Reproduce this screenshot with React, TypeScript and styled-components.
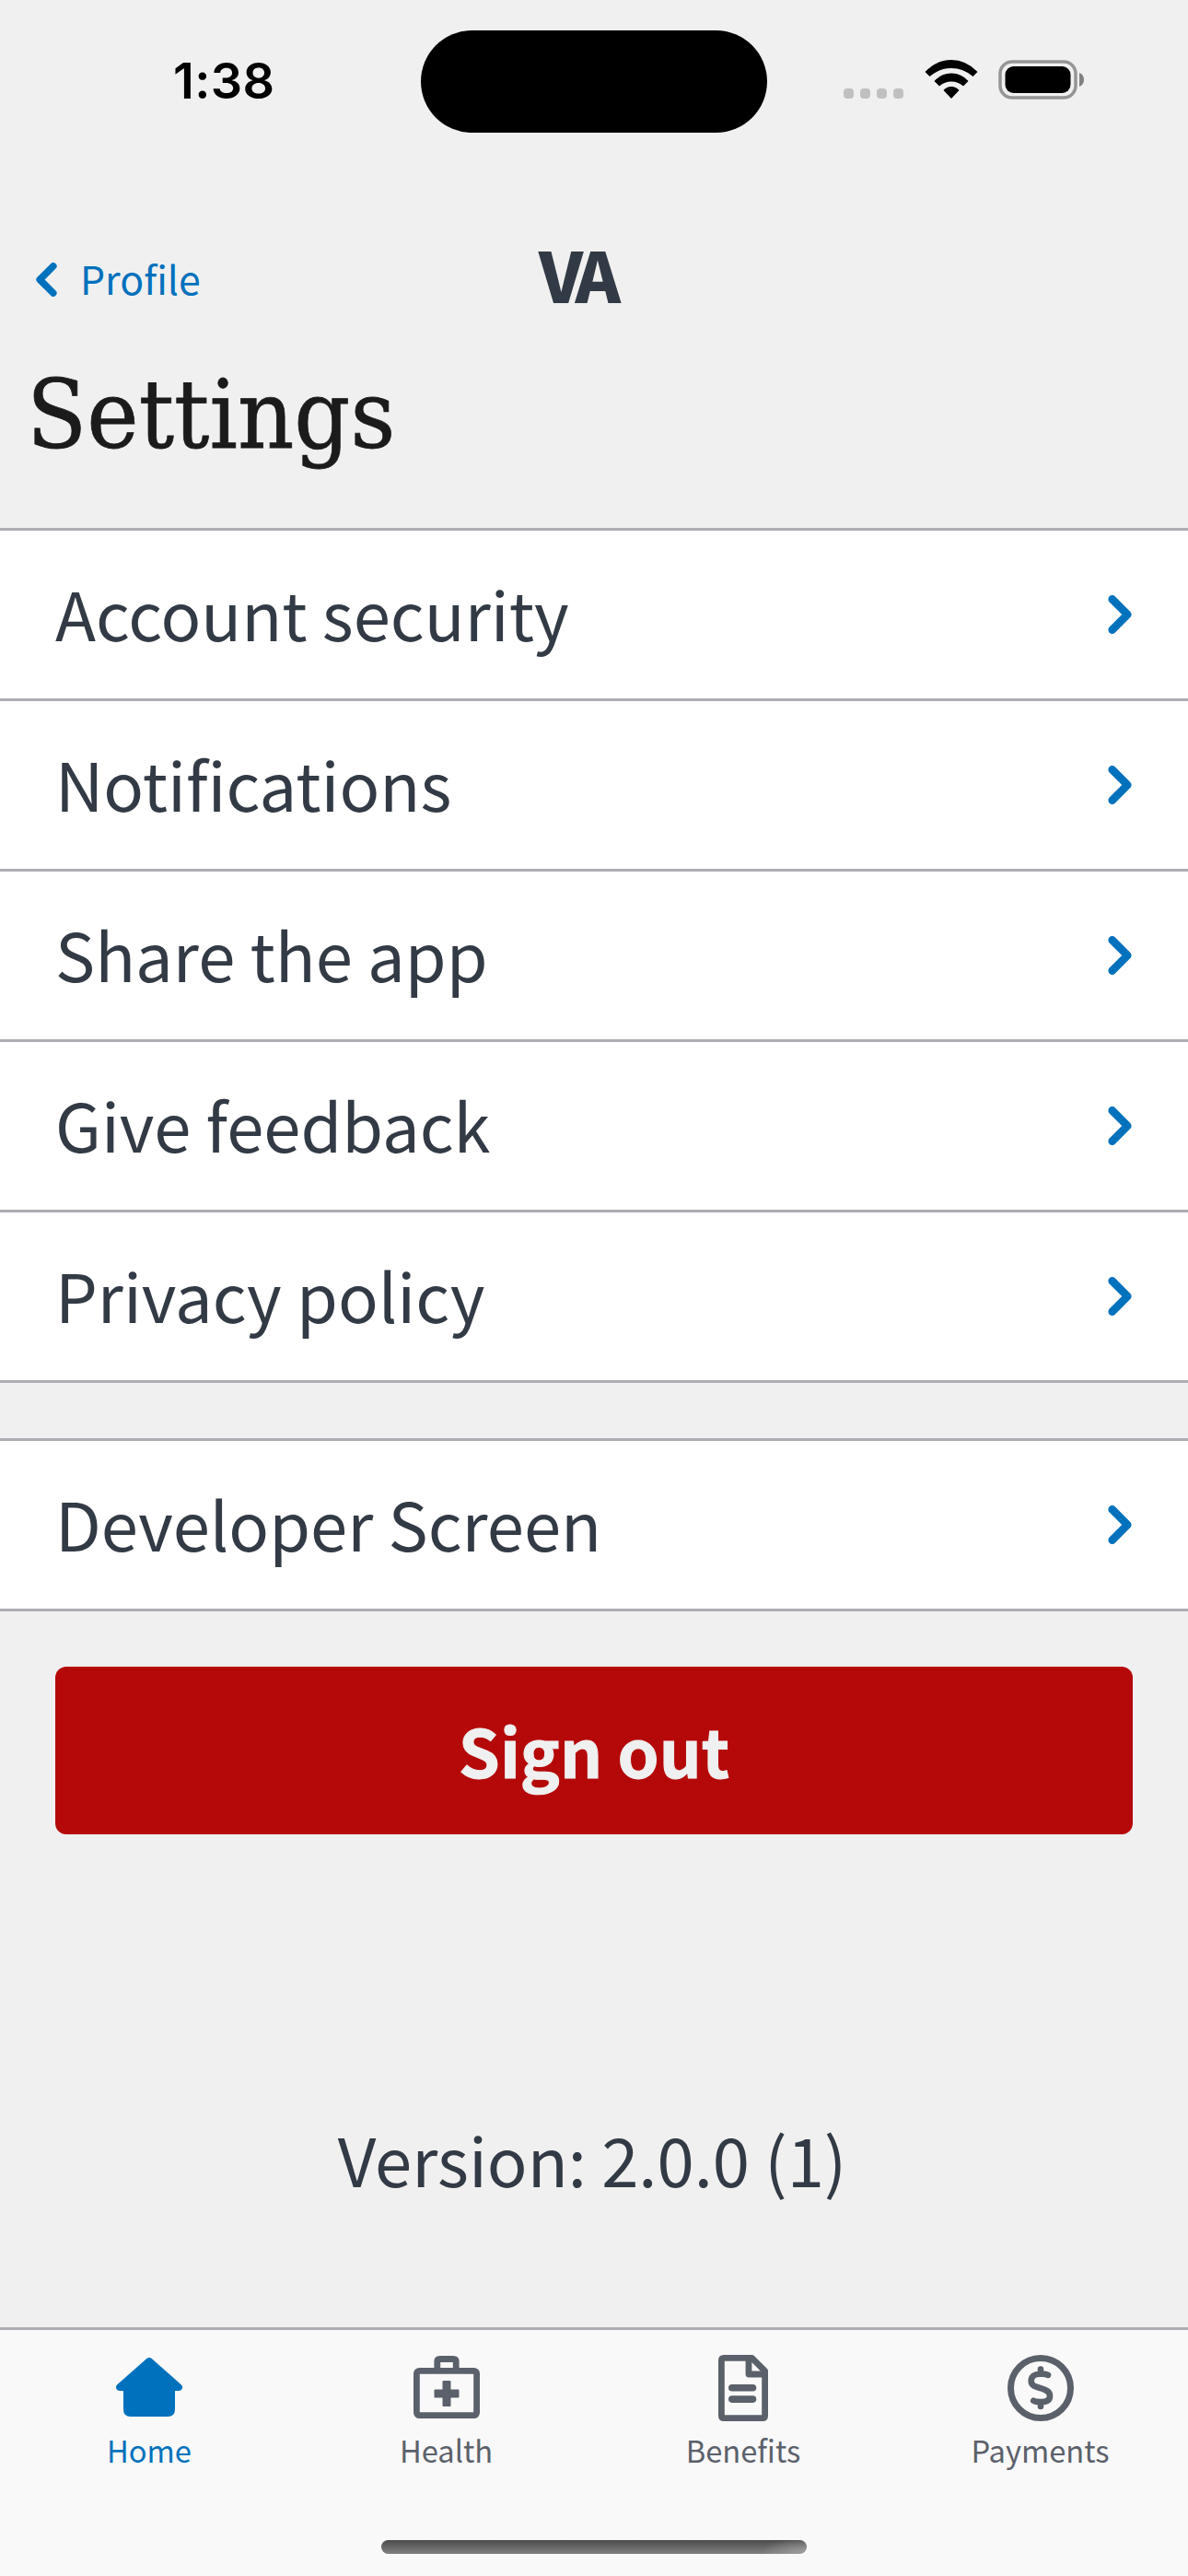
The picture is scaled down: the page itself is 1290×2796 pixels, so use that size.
import React from 'react';
import styled, { createGlobalStyle } from 'styled-components';

const sans = "'Noto Sans CJK JP', 'Noto Sans', sans-serif";
const blue = '#0071bc';
const ink = '#323a45';
const line = '#adadb4';
const gray = '#5b616b';

const Global = createGlobalStyle`
  * { box-sizing: border-box; }
  body { margin: 0; background: #f0f0f0; }
  button { font: inherit; border: 0; margin: 0; padding: 0; background: none; }
`;

const Screen = styled.div`
  width: 1290px;
  height: 2796px;
  display: flex;
  flex-direction: column;
  background: #f0f0f0;
  color: ${ink};
  font-family: ${sans};
  overflow: hidden;
`;

const StatusBar = styled.header`
  height: 177px;
  flex: none;
  display: grid;
  grid-template-columns: 457px 376px 1fr;
  align-items: start;
  padding-top: 33px;
`;

const Clock = styled.time`
  padding-left: 188px;
  margin-top: 23px;
  font: 600 54px/64px Inter, sans-serif;
  letter-spacing: 0.4px;
  color: #000;
`;

const Island = styled.div`
  height: 111px;
  border-radius: 56px;
  background: #000;
`;

const StatusIcons = styled.div`
  display: flex;
  align-items: flex-end;
  padding: 32px 0 0 83px;
`;

const Signal = styled.div`
  display: flex;
  gap: 7px;
  margin: 0 23px 1px 0;
`;

const Dot = styled.i`
  width: 11px;
  height: 11px;
  border-radius: 4px;
  background: #c0c0c0;
`;

const Wifi = styled.svg`
  width: 58px;
  height: 42px;
  margin: 0 22px 1px 0;
`;

const Battery = styled.svg`
  width: 94px;
  height: 43px;
`;

const NavBar = styled.nav`
  height: 200px;
  flex: none;
  display: grid;
  grid-template-columns: 585px auto 1fr;
  align-items: start;
`;

const BackLink = styled.button`
  display: flex;
  align-items: center;
  gap: 25px;
  margin: 93px 0 0 39px;
  color: ${blue};
  font-size: 42.8px;
  line-height: 62px;
  justify-self: start;
`;

const BackIcon = styled.svg`
  width: 23px;
  height: 37px;
  margin-top: 4px;
`;

const Logo = styled.div`
  margin-top: 70px;
  font-weight: 900;
  font-size: 75px;
  line-height: 100px;
  letter-spacing: -7px;
`;

const Title = styled.h1`
  margin: 0 0 0 29px;
  height: 196px;
  flex: none;
  font: 400 102px/147px 'DejaVu Serif', serif;
  color: #1b1b1b;
  -webkit-text-stroke: 0.8px #1b1b1b;
  transform: scaleX(0.935);
  transform-origin: left;
`;

const List = styled.ul`
  list-style: none;
  margin: 0 0 60px;
  padding: 0;
  border-top: 3px solid ${line};
  background: #fff;
`;

const Row = styled.li`
  height: 185px;
  display: flex;
  align-items: center;
  justify-content: space-between;
  padding: 0 61px 0 60px;
  border-bottom: 3px solid ${line};
`;

const RowLabel = styled.span`
  font-size: 72.4px;
  line-height: 100px;
  padding-bottom: 4px;
`;

const RowIcon = styled.svg`
  width: 26px;
  height: 42px;
`;

const SignOut = styled.button`
  height: 182px;
  flex: none;
  margin: 0 60px;
  padding-bottom: 4px;
  border-radius: 12px;
  background: #b50909;
  color: #f0f0f0;
  font-family: ${sans};
  font-weight: 700;
  font-size: 72.2px;
  -webkit-text-stroke: 1px #f0f0f0;
`;

const Version = styled.p`
  margin: 302px 0 0;
  padding-right: 4px;
  font-size: 72.4px;
  line-height: 100px;
  text-align: center;
`;

const TabBar = styled.footer`
  height: 270px;
  flex: none;
  margin-top: auto;
  display: flex;
  flex-direction: column;
  align-items: center;
  border-top: 3px solid ${line};
  background: #f9f9f9;
`;

const Tabs = styled.div`
  width: 100%;
  height: 228px;
  display: grid;
  grid-template-columns: repeat(4, 1fr);
`;

const Tab = styled.button<{ $active?: boolean }>`
  display: flex;
  flex-direction: column;
  align-items: center;
  justify-content: flex-start;
  padding: 27px 0 0 1.5px;
  color: ${(p) => (p.$active ? blue : gray)};
  font-size: 32.7px;
  line-height: 48px;
`;

const TabIcon = styled.svg`
  width: 72px;
  height: 72px;
  margin-bottom: 7px;
`;

const HomeIndicator = styled.div`
  width: 462px;
  height: 15px;
  border-radius: 8px;
  background:
    radial-gradient(50px 18px at 100% 100%, rgba(165, 165, 165, 0.9), rgba(165, 165, 165, 0)),
    linear-gradient(#4c4c4c, #808080);
`;

const Chevron = ({ back }: { back?: boolean }) => {
  const Icon = back ? BackIcon : RowIcon;
  return (
    <Icon viewBox="0 0 26 42">
      <path
        transform={back ? 'translate(26 0) scale(-1 1)' : undefined}
        d="M4.700 4.400 21.300 21 4.700 37.600"
        fill="none"
        stroke={blue}
        strokeWidth="8.6"
        strokeLinecap="round"
        strokeLinejoin="round"
      />
    </Icon>
  );
};

const settings = ['Account security', 'Notifications', 'Share the app', 'Give feedback', 'Privacy policy'];

const SettingsList = ({ items }: { items: string[] }) => (
  <List>
    {items.map((item) => (
      <Row key={item}>
        <RowLabel>{item}</RowLabel>
        <Chevron />
      </Row>
    ))}
  </List>
);

const tabs = [
  {
    label: 'Home',
    icon: (
      <path
        fill="currentColor"
        d="M33 4.300q3-2.800 6 0L70.700 32.300q2 2 1 4.500-1.200 2.200-3.700 2.200H64v20q0 8-8 8H16q-8 0-8-8V39H4q-2.500 0-3.700-2.200-1-2.500 1-4.500z"
      />
    ),
  },
  {
    label: 'Health',
    icon: (
      <g>
        <g fill="none" stroke="currentColor" strokeWidth="6.800">
          <rect x="3.400" y="17.400" width="65.200" height="48.200" rx="3" />
          <path d="M25.800 17V7.500q0-3 3-3h14.400q3 0 3 3V17" />
        </g>
        <path fill="currentColor" d="M32.500 28h7q1 0 1 1v8.500h8q1 0 1 1v7q0 1-1 1h-8V55q0 1-1 1h-7q-1 0-1-1v-8.500h-8q-1 0-1-1v-7q0-1 1-1h8V29q0-1 1-1z" />
      </g>
    ),
  },
  {
    label: 'Benefits',
    icon: (
      <g fill="none" stroke="currentColor" strokeWidth="6.800" strokeLinejoin="round" strokeLinecap="round">
        <path d="M15 3.400H45.500L59.600 17.500V66q0 2.600-2.600 2.600H15q-2.600 0-2.600-2.600V6q0-2.600 2.600-2.600zM42 4v17H59" />
        <path strokeWidth="7.600" d="M23.800 35.800h22.700M23.800 48.100h22.700" />
      </g>
    ),
  },
  {
    label: 'Payments',
    icon: (
      <g fill="none" stroke="currentColor" strokeWidth="6.600" strokeLinecap="round">
        <circle cx="36" cy="36" r="32.500" strokeWidth="7" />
        <path d="M44 21.900C41.500 20.300 39 20.700 35 20.700c-5.500 0-9.300 2.600-9.300 7.600 0 5 4 6 10.300 7.900 6 1.800 10 3.600 10 8.300 0 5-4 6.500-9 6.500-4 0-6.500.200-8.800-1.300M36 15.500v5M36 51v5" />
      </g>
    ),
  },
];

export default function App() {
  return (
    <Screen>
      <Global />
      <StatusBar>
        <Clock>1:38</Clock>
        <Island />
        <StatusIcons>
          <Signal>
            <Dot />
            <Dot />
            <Dot />
            <Dot />
          </Signal>
          <Wifi viewBox="0 0 58 42">
            <path d="M0.500 13Q13 0 29 0T57.500 13L52.500 18Q42 9 29 9T5.500 18zM10.500 23Q18 14.500 29 14.500T47.500 23L42 28.500Q36 23.500 29 23.500T16 28.500zM20.500 33Q24 29 29 29T37.500 33L29 42z" />
          </Wifi>
          <Battery viewBox="0 0 94 43">
            <rect x="2" y="2" width="82" height="39" rx="13" fill="none" stroke="#959595" strokeWidth="3.500" />
            <rect x="7.500" y="7" width="71" height="29" rx="9" />
            <path fill="#808080" d="M88 14q5 2 5 7.500T88 29z" />
          </Battery>
        </StatusIcons>
      </StatusBar>
      <NavBar>
        <BackLink>
          <Chevron back />
          Profile
        </BackLink>
        <Logo>VA</Logo>
      </NavBar>
      <Title>Settings</Title>
      <SettingsList items={settings} />
      <SettingsList items={['Developer Screen']} />
      <SignOut>Sign out</SignOut>
      <Version>Version: 2.0.0 (1)</Version>
      <TabBar>
        <Tabs>
          {tabs.map((tab, i) => (
            <Tab key={tab.label} $active={i === 0}>
              <TabIcon viewBox="0 0 72 72">{tab.icon}</TabIcon>
              {tab.label}
            </Tab>
          ))}
        </Tabs>
        <HomeIndicator />
      </TabBar>
    </Screen>
  );
}
